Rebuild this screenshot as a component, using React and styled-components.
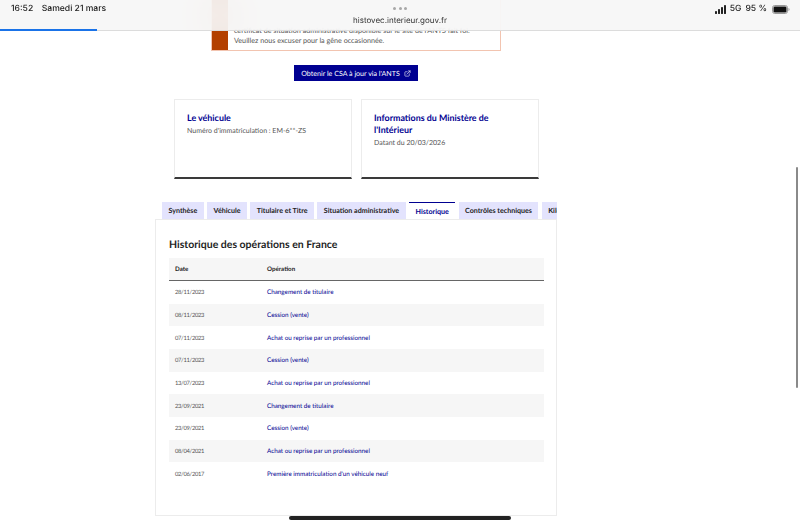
import styled, { createGlobalStyle } from "styled-components";
import { ExternalLink } from "lucide-react";

const GlobalStyle = createGlobalStyle`
  html, body {
    margin: 0;
    padding: 0;
    background: #fff;
  }
  body {
    font-family: "Lato", "Liberation Sans", sans-serif;
    text-rendering: geometricPrecision;
    overflow: hidden;
  }
  * {
    box-sizing: border-box;
  }
`;

const Page = styled.div`
  width: 800px;
  height: 525px;
  overflow: hidden;
  position: relative;
  background: #fff;
  filter: blur(0.3px);
`;

const StatusBar = styled.header`
  position: absolute;
  top: 0;
  left: 0;
  right: 0;
  height: 31px;
  z-index: 2;
  display: flex;
  justify-content: space-between;
  padding: 3.5px 10px 0 11px;
  font-family: "Inter", "Liberation Sans", sans-serif;
  font-size: 8.6px;
  font-weight: 500;
  color: #222;
  background: rgba(246, 246, 246, 0.9);
  backdrop-filter: blur(20px);
  border-bottom: 1px solid #dcdcdc;
`;

const Clock = styled.div`
  display: flex;
  gap: 8.5px;
  line-height: 11px;
`;

const Center = styled.div`
  position: absolute;
  left: 0;
  right: 0;
  top: 7px;
  display: flex;
  flex-direction: column;
  align-items: center;
  gap: 5px;
`;

const Dots = styled.div`
  display: flex;
  gap: 2.5px;
`;

const Dot = styled.span`
  width: 3px;
  height: 3px;
  border-radius: 50%;
  background: #a8a8a8;
`;

const Url = styled.div`
  font-size: 8px;
  font-weight: 400;
  line-height: 11px;
  color: #333;
`;

const Status = styled.div`
  display: flex;
  align-items: flex-start;
  gap: 3px;
  line-height: 11px;
`;

const Percent = styled.span`
  margin-left: 1px;
`;

const Progress = styled.div`
  position: absolute;
  left: 0;
  bottom: -1px;
  width: 97px;
  height: 2px;
  background: #1a73e8;
`;

const Main = styled.main`
  display: flex;
  flex-direction: column;
  align-items: center;
  width: 712px;
`;

const Alert = styled.div`
  display: flex;
  width: 290px;
  height: 51px;
  border: 1px solid #f2c4b0;
  border-top: none;
`;

const AlertMark = styled.div`
  width: 16px;
  background: #b34000;
`;

const AlertText = styled.p`
  margin: 0;
  padding: 26px 0 0 6px;
  font-size: 7.2px;
  line-height: 10.2px;
  color: #555;
  white-space: nowrap;
`;

const CsaButton = styled.a`
  display: flex;
  align-items: center;
  gap: 4px;
  margin-top: 14px;
  height: 16px;
  padding: 0 7px;
  background: #000091;
  color: #fff;
  font-size: 7.1px;
`;

const Cards = styled.section`
  display: flex;
  gap: 9px;
  margin-top: 18px;
`;

const Card = styled.article`
  width: 178px;
  height: 80px;
  padding: 12px 12.5px 0;
  border: 1px solid #ececec;
  border-bottom: 2px solid #3a3a3a;
`;

const CardTitle = styled.h3`
  margin: 0;
  font-size: 8.9px;
  font-weight: 700;
  line-height: 11.5px;
  color: #000091;
`;

const CardText = styled.p`
  margin: 2.5px 0 0;
  font-size: 7px;
  line-height: 10px;
  color: #555;
`;

const TabsArea = styled.section`
  width: 402px;
  margin-top: 23px;
`;

const TabList = styled.nav`
  display: flex;
  gap: 3.3px;
  height: 17px;
  padding-left: 7px;
  overflow: hidden;
`;

const Tab = styled.div`
  flex: none;
  display: flex;
  align-items: center;
  padding: 0 6.5px;
  font-size: 7.1px;
  font-weight: 700;
  white-space: nowrap;
  background: ${(p) => (p.$active ? "#fff" : "#e3e3fd")};
  color: ${(p) => (p.$active ? "#000091" : "#222")};
  border-top: ${(p) => (p.$active ? "1px solid #000091" : "none")};
`;

const Panel = styled.div`
  height: 297px;
  padding: 19px 12px 0 13px;
  border: 1px solid #ececec;
`;

const PanelTitle = styled.h2`
  margin: 0;
  font-size: 10.5px;
  font-weight: 700;
  line-height: 13px;
  color: #1e1e1e;
`;

const Table = styled.div`
  margin-top: 6px;
`;

const HeadRow = styled.div`
  display: grid;
  grid-template-columns: 92px 1fr;
  align-items: center;
  height: 23px;
  padding-left: 6px;
  font-size: 6.2px;
  font-weight: 700;
  color: #222;
  background: #f6f6f6;
  border-bottom: 1px solid #666;
`;

const Row = styled.div`
  display: grid;
  grid-template-columns: 92px 1fr;
  align-items: center;
  height: 22.67px;
  padding: 1px 0 0 6px;
  font-size: 6.3px;
  background: ${(p) => (p.$shaded ? "#f6f6f6" : "#fff")};
`;

const DateCell = styled.span`
  font-size: 5.8px;
  letter-spacing: -0.3px;
  color: #555;
`;

const OperationLink = styled.a`
  color: #000091;
`;

const Scrollbar = styled.div`
  position: absolute;
  left: 796px;
  top: 167px;
  width: 2px;
  height: 221px;
  border-radius: 1px;
  background: #8a8a8a;
`;

const HomeIndicator = styled.div`
  position: absolute;
  left: 289px;
  top: 516px;
  width: 222px;
  height: 4px;
  border-radius: 2px;
  background: #222;
`;

const tabs = [
  "Synthèse",
  "Véhicule",
  "Titulaire et Titre",
  "Situation administrative",
  "Historique",
  "Contrôles techniques",
  "Kilométrage",
];

const operations = [
  ["28/11/2023", "Changement de titulaire"],
  ["08/11/2023", "Cession (vente)"],
  ["07/11/2023", "Achat ou reprise par un professionnel"],
  ["07/11/2023", "Cession (vente)"],
  ["13/07/2023", "Achat ou reprise par un professionnel"],
  ["23/09/2021", "Changement de titulaire"],
  ["23/09/2021", "Cession (vente)"],
  ["08/04/2021", "Achat ou reprise par un professionnel"],
  ["02/06/2017", "Première immatriculation d'un véhicule neuf"],
];

function SignalIcon() {
  return (
    <svg width="12" height="9" viewBox="0 0 12 9" style={{ marginTop: 1 }}>
      <rect x="0" y="6" width="2" height="3" rx="0.4" fill="#222" />
      <rect x="3" y="4" width="2" height="5" rx="0.4" fill="#222" />
      <rect x="6" y="2" width="2" height="7" rx="0.4" fill="#222" />
      <rect x="9" y="0" width="2" height="9" rx="0.4" fill="#222" />
    </svg>
  );
}

function BatteryIcon() {
  return (
    <svg width="18" height="9" viewBox="0 0 18 9" style={{ marginTop: 1, marginLeft: 2 }}>
      <rect x="0.5" y="0.5" width="15" height="8" rx="2.2" fill="none" stroke="#999" />
      <rect x="1.5" y="1.5" width="13" height="6" rx="1.3" fill="#111" />
      <path d="M16.5 3v3c.6-.2 1-.8 1-1.5s-.4-1.3-1-1.5z" fill="#999" />
    </svg>
  );
}

export default function App() {
  return (
    <Page>
      <GlobalStyle />
      <StatusBar>
        <Clock>
          <span>16:52</span>
          <span>Samedi 21 mars</span>
        </Clock>
        <Center>
          <Dots>
            <Dot />
            <Dot />
            <Dot />
          </Dots>
          <Url>histovec.interieur.gouv.fr</Url>
        </Center>
        <Status>
          <SignalIcon />
          <span>5G</span>
          <Percent>95 %</Percent>
          <BatteryIcon />
        </Status>
        <Progress />
      </StatusBar>

      <Main>
        <Alert>
          <AlertMark />
          <AlertText>
            certificat de situation administrative disponible sur le site de l'ANTS fait foi.
            <br />
            Veuillez nous excuser pour la gêne occasionnée.
          </AlertText>
        </Alert>

        <CsaButton>
          Obtenir le CSA à jour via l'ANTS
          <ExternalLink size={7} strokeWidth={2} />
        </CsaButton>

        <Cards>
          <Card>
            <CardTitle>Le véhicule</CardTitle>
            <CardText>Numéro d'immatriculation : EM-6**-ZS</CardText>
          </Card>
          <Card>
            <CardTitle>Informations du Ministère de l'Intérieur</CardTitle>
            <CardText>Datant du 20/03/2026</CardText>
          </Card>
        </Cards>

        <TabsArea>
          <TabList>
            {tabs.map((tab) => (
              <Tab key={tab} $active={tab === "Historique"}>
                {tab}
              </Tab>
            ))}
          </TabList>
          <Panel>
            <PanelTitle>Historique des opérations en France</PanelTitle>
            <Table>
              <HeadRow>
                <span>Date</span>
                <span>Opération</span>
              </HeadRow>
              {operations.map(([date, label], index) => (
                <Row key={index} $shaded={index % 2 === 1}>
                  <DateCell>{date}</DateCell>
                  <OperationLink>{label}</OperationLink>
                </Row>
              ))}
            </Table>
          </Panel>
        </TabsArea>
      </Main>

      <Scrollbar />
      <HomeIndicator />
    </Page>
  );
}
